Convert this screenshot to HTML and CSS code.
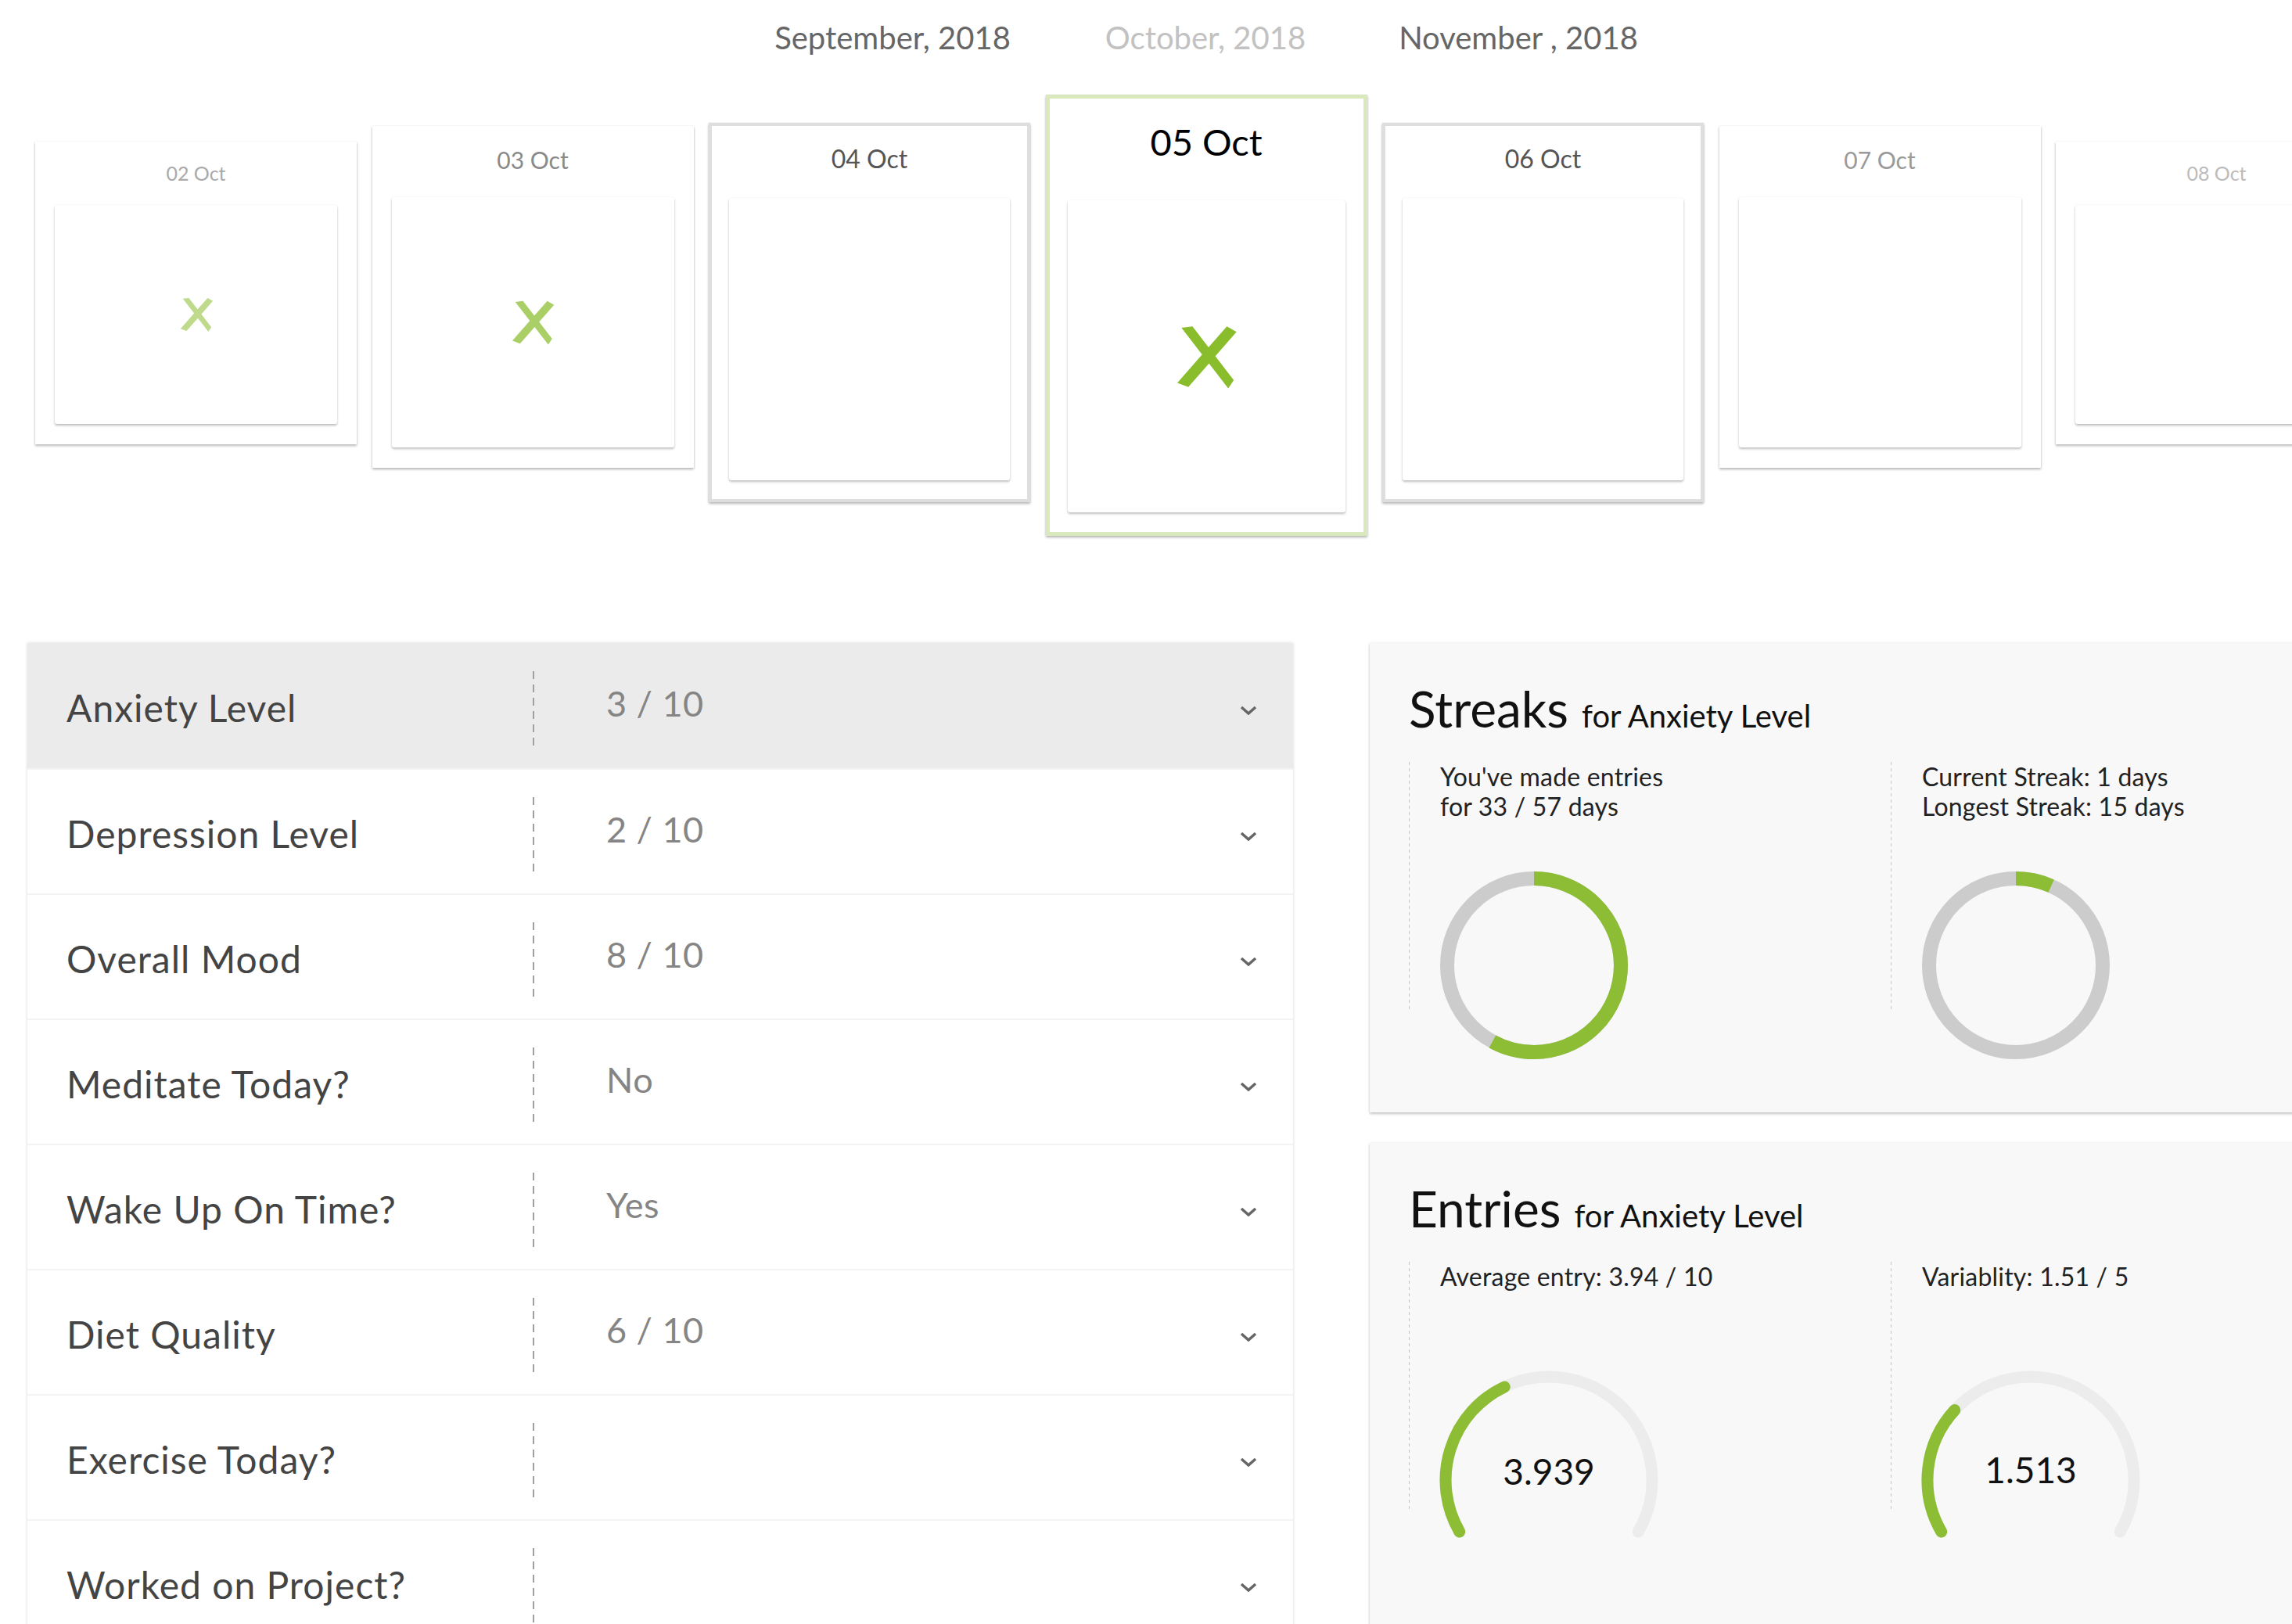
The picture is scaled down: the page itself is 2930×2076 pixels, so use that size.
FILE: index.html
```html
<!DOCTYPE html>
<html>
<head>
<meta charset="utf-8">
<title>Tracker</title>
<link rel="stylesheet" href="styles.css">
</head>
<body>
<div class="months">
  <div class="month">September, 2018</div>
  <div class="month month-current">October, 2018</div>
  <div class="month">November , 2018</div>
</div>

<div class="days">
  <div class="day day-far">
    <div class="day-label">02 Oct</div>
    <div class="day-sheet">
      <svg class="mark mark-far" viewBox="0 0 100 100"><path d="M14 8 L30 6 L90 84 L82 96 Z"/><path d="M80 6 L94 14 L24 94 L8 88 Z"/></svg>
    </div>
  </div>
  <div class="day day-mid">
    <div class="day-label">03 Oct</div>
    <div class="day-sheet">
      <svg class="mark mark-mid" viewBox="0 0 100 100"><path d="M14 8 L30 6 L90 84 L82 96 Z"/><path d="M80 6 L94 14 L24 94 L8 88 Z"/></svg>
    </div>
  </div>
  <div class="day day-near">
    <div class="day-label">04 Oct</div>
    <div class="day-sheet"></div>
  </div>
  <div class="day day-center">
    <div class="day-label">05 Oct</div>
    <div class="day-sheet">
      <svg class="mark mark-center" viewBox="0 0 100 100"><path d="M14 8 L30 6 L90 84 L82 96 Z"/><path d="M80 6 L94 14 L24 94 L8 88 Z"/></svg>
    </div>
  </div>
  <div class="day day-near">
    <div class="day-label">06 Oct</div>
    <div class="day-sheet"></div>
  </div>
  <div class="day day-mid day-mid-r">
    <div class="day-label">07 Oct</div>
    <div class="day-sheet"></div>
  </div>
  <div class="day day-far day-far-r">
    <div class="day-label">08 Oct</div>
    <div class="day-sheet"></div>
  </div>
</div>

<div class="bottom">
  <div class="metrics">
    <div class="row row-active">
      <div class="row-label">Anxiety Level</div>
      <div class="row-sep"></div>
      <div class="row-value">3 / 10</div>
      <svg class="chev" viewBox="0 0 22 12"><polyline points="2,2 11,10 20,2"/></svg>
    </div>
    <div class="row">
      <div class="row-label">Depression Level</div>
      <div class="row-sep"></div>
      <div class="row-value">2 / 10</div>
      <svg class="chev" viewBox="0 0 22 12"><polyline points="2,2 11,10 20,2"/></svg>
    </div>
    <div class="row">
      <div class="row-label">Overall Mood</div>
      <div class="row-sep"></div>
      <div class="row-value">8 / 10</div>
      <svg class="chev" viewBox="0 0 22 12"><polyline points="2,2 11,10 20,2"/></svg>
    </div>
    <div class="row">
      <div class="row-label">Meditate Today?</div>
      <div class="row-sep"></div>
      <div class="row-value">No</div>
      <svg class="chev" viewBox="0 0 22 12"><polyline points="2,2 11,10 20,2"/></svg>
    </div>
    <div class="row">
      <div class="row-label">Wake Up On Time?</div>
      <div class="row-sep"></div>
      <div class="row-value">Yes</div>
      <svg class="chev" viewBox="0 0 22 12"><polyline points="2,2 11,10 20,2"/></svg>
    </div>
    <div class="row">
      <div class="row-label">Diet Quality</div>
      <div class="row-sep"></div>
      <div class="row-value">6 / 10</div>
      <svg class="chev" viewBox="0 0 22 12"><polyline points="2,2 11,10 20,2"/></svg>
    </div>
    <div class="row">
      <div class="row-label">Exercise Today?</div>
      <div class="row-sep"></div>
      <div class="row-value"></div>
      <svg class="chev" viewBox="0 0 22 12"><polyline points="2,2 11,10 20,2"/></svg>
    </div>
    <div class="row">
      <div class="row-label">Worked on Project?</div>
      <div class="row-sep"></div>
      <div class="row-value"></div>
      <svg class="chev" viewBox="0 0 22 12"><polyline points="2,2 11,10 20,2"/></svg>
    </div>
  </div>

  <div class="stats">
    <div class="stat-card stat-streaks">
      <div class="stat-title"><span class="stat-big">Streaks</span><span class="stat-sub">for Anxiety Level</span></div>
      <div class="stat-cols">
        <div class="stat-col">
          <div class="stat-text">You've made entries<br>for 33 / 57 days</div>
          <svg class="ring" viewBox="0 0 240 240">
            <circle class="ring-track" cx="120" cy="120" r="111"/>
            <circle class="ring-fill" cx="120" cy="120" r="111" stroke-dasharray="403.7 697.4" transform="rotate(-90 120 120)"/>
          </svg>
        </div>
        <div class="stat-col">
          <div class="stat-text">Current Streak: 1 days<br>Longest Streak: 15 days</div>
          <svg class="ring" viewBox="0 0 240 240">
            <circle class="ring-track" cx="120" cy="120" r="111"/>
            <circle class="ring-fill" cx="120" cy="120" r="111" stroke-dasharray="46.5 697.4" transform="rotate(-90 120 120)"/>
          </svg>
        </div>
      </div>
    </div>

    <div class="stat-card stat-entries">
      <div class="stat-title"><span class="stat-big">Entries</span><span class="stat-sub">for Anxiety Level</span></div>
      <div class="stat-cols">
        <div class="stat-col">
          <div class="stat-text">Average entry: 3.94 / 10</div>
          <svg class="gauge" viewBox="0 0 280 280">
            <path class="gauge-track" d="M25.7 206 A132 132 0 1 1 254.3 206"/>
            <path class="gauge-fill" d="M25.7 206 A132 132 0 0 1 83.2 20.9"/>
            <text class="gauge-num" x="140" y="146">3.939</text>
          </svg>
        </div>
        <div class="stat-col">
          <div class="stat-text">Variablity: 1.51 / 5</div>
          <svg class="gauge" viewBox="0 0 280 280">
            <path class="gauge-track" d="M25.7 206 A132 132 0 1 1 254.3 206"/>
            <path class="gauge-fill" d="M25.7 206 A132 132 0 0 1 42.8 50.6"/>
            <text class="gauge-num" x="140" y="144">1.513</text>
          </svg>
        </div>
      </div>
    </div>
  </div>
</div>
</body>
</html>
```

FILE: styles.css
```css
html, body {
  margin: 0;
  padding: 0;
  background: #ffffff;
  overflow: hidden;
}

body {
  font-family: Lato, "Open Sans", "Liberation Sans", sans-serif;
  color: #333;
  width: 2930px;
}

/* Month header */
.months {
  display: flex;
  justify-content: center;
  padding-left: 152px;
  padding-top: 24px;
  height: 121px;
  box-sizing: border-box;
}

.month {
  width: 400px;
  text-align: center;
  font-size: 40px;
  line-height: 48px;
  color: #666;
}

.month-current {
  color: #c2c2c2;
}

/* Day cards */
.days {
  display: flex;
  align-items: flex-start;
  gap: 19.5px;
  padding-left: 45px;
}

.day {
  flex: none;
  width: 411px;
  box-sizing: border-box;
  background: #fff;
  display: flex;
  flex-direction: column;
  padding: 0 25px 26px;
  box-shadow: 0 2px 3px rgba(0, 0, 0, 0.28), 0 0 2px rgba(0, 0, 0, 0.08);
}

.day-label {
  text-align: center;
  flex: none;
}

.day-sheet {
  flex: 1;
  background: #fff;
  border-radius: 3px;
  box-shadow: 0 2px 3px rgba(0, 0, 0, 0.25), 0 0 2px rgba(0, 0, 0, 0.06);
  display: flex;
  align-items: center;
  justify-content: center;
}

.day-far {
  margin-top: 60px;
  height: 387px;
}
.day-far .day-label {
  height: 81px;
  line-height: 80px;
  font-size: 25px;
  color: #aaa;
}
.day-far-r .day-label {
  color: #bbb;
}

.day-mid {
  margin-top: 40px;
  height: 437px;
}
.day-mid .day-label {
  height: 91px;
  line-height: 86px;
  font-size: 30px;
  color: #8a8a8a;
}
.day-mid-r .day-label {
  color: #9a9a9a;
}

.day-near {
  margin-top: 36px;
  height: 485px;
  border: 4px solid #dedede;
  padding: 0 22px 24px;
}
.day-near .day-label {
  height: 92px;
  line-height: 84px;
  font-size: 32px;
  color: #555;
}

.day-center {
  margin-top: 0;
  height: 564px;
  border: 5px solid #d9e9bc;
  padding: 0 23px 25px;
}
.day-center .day-label {
  height: 130px;
  line-height: 110px;
  font-size: 47px;
  color: #000;
}

.mark path {
  fill: #8abd2c;
}
.mark-far {
  width: 52px;
  height: 48px;
  opacity: 0.55;
}
.mark-mid {
  width: 68px;
  height: 62px;
  opacity: 0.72;
}
.mark-center {
  width: 94px;
  height: 88px;
}

/* Bottom area */
.bottom {
  display: flex;
  align-items: flex-start;
  margin-top: 137px;
  padding-left: 35px;
}

.metrics {
  flex: none;
  width: 1618px;
  background: #fff;
  box-shadow: 0 0 4px rgba(0, 0, 0, 0.16);
}

.row {
  height: 160px;
  box-sizing: border-box;
  display: flex;
  align-items: center;
  padding: 8px 46px 0 50px;
  background: #fff;
  border-top: 2px solid #f3f3f3;
}

.row-active {
  background: #ebebeb;
  border-top: none;
}

.row-label {
  flex: none;
  width: 596px;
  font-size: 48px;
  color: #444;
  letter-spacing: 1px;
  margin-bottom: 4px;
}

.row-sep {
  flex: none;
  width: 2px;
  height: 97px;
  background: repeating-linear-gradient(to bottom, #a0a0a0 0, #a0a0a0 10px, transparent 10px, transparent 17px);
}

.row-value {
  flex: 1;
  padding-left: 92px;
  font-size: 45px;
  color: #858585;
  letter-spacing: 0.5px;
  margin-bottom: 14px;
}

.chev {
  flex: none;
  width: 22px;
  height: 12px;
  margin-top: 4px;
}
.chev polyline {
  fill: none;
  stroke: #666;
  stroke-width: 3.5;
}

/* Stats cards */
.stats {
  flex: none;
  width: 1240px;
  margin-left: 98px;
  display: flex;
  flex-direction: column;
  gap: 39px;
}

.stat-card {
  background: #f8f8f8;
  box-shadow: 0 2px 3px rgba(0, 0, 0, 0.22), 0 0 3px rgba(0, 0, 0, 0.08);
  padding: 52px 0 0 50px;
  box-sizing: border-box;
}

.stat-streaks {
  height: 600px;
}

.stat-entries {
  height: 700px;
}

.stat-title {
  font-size: 64px;
  line-height: 1;
  color: #111;
  white-space: nowrap;
}

.stat-sub {
  font-size: 40px;
  margin-left: 17px;
  color: #111;
}

.stat-cols {
  display: flex;
  margin-top: 36px;
}

.stat-col {
  flex: none;
  width: 616px;
  height: 319px;
  box-sizing: border-box;
  padding-left: 40px;
  background: linear-gradient(to bottom, #c6c6c6 50%, transparent 50%) left top / 1px 8px repeat-y;
}

.stat-text {
  font-size: 32px;
  line-height: 38px;
  color: #222;
  letter-spacing: 0.2px;
}

.ring {
  display: block;
  width: 240px;
  height: 240px;
  margin-top: 64px;
}

.ring circle {
  fill: none;
  stroke-width: 18;
}
.ring-track {
  stroke: #cccccc;
}
.ring-fill {
  stroke: #8cbd34;
}

.gauge {
  display: block;
  width: 280px;
  height: 280px;
  margin-top: 101px;
  margin-left: -1px;
}

.gauge path {
  fill: none;
  stroke-width: 15;
  stroke-linecap: round;
}
.gauge-track {
  stroke: #ececec;
}
.gauge-fill {
  stroke: #8cbd34;
}

.gauge-num {
  font-family: Lato, "Open Sans", sans-serif;
  font-size: 46px;
  fill: #111;
  text-anchor: middle;
}
```
